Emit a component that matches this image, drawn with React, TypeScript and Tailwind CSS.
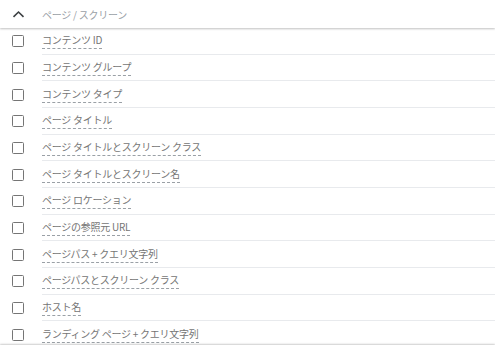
import React from "react";

const items = [
  "コンテンツ ID",
  "コンテンツ グループ",
  "コンテンツ タイプ",
  "ページ タイトル",
  "ページ タイトルとスクリーン クラス",
  "ページ タイトルとスクリーン名",
  "ページ ロケーション",
  "ページの参照元 URL",
  "ページパス + クエリ文字列",
  "ページパスとスクリーン クラス",
  "ホスト名",
  "ランディング ページ + クエリ文字列",
];

export default function App() {
  return (
    <div
      className="relative w-[495px] h-[350px] overflow-hidden bg-white"
      style={{ fontFamily: '"Noto Sans CJK JP", "Noto Sans", sans-serif' }}
    >
      <div className="relative z-10 flex h-[28px] items-center bg-white shadow-[0_1px_2px_rgba(0,0,0,0.25)]">
        <div className="flex w-[36px] justify-center">
          <svg width="13" height="8" viewBox="0 0 13 8">
            <path d="M1.5 6.8 L6.5 2 L11.5 6.8" fill="none" stroke="#3c4043" strokeWidth="1.6" />
          </svg>
        </div>
        <span className="ml-[6px] text-[10px] text-[#9aa0a6] tracking-[-0.25px]">ページ / スクリーン</span>
      </div>
      <div className="flex flex-col">
        {items.map((t, i) => (
          <div key={i} className="flex h-[26.67px] items-stretch">
            <div className="flex w-[42px] shrink-0 items-center pl-[12px]">
              <div className="h-[12px] w-[12px] rounded-[1.5px] border-[1.5px] border-[#757575]" />
            </div>
            <div
              className={`flex flex-1 items-center ${i < items.length - 1 ? "border-b border-[#e8eaed]" : ""}`}
            >
              <span className="mt-[1px] text-[10px] leading-[13px] pb-[2px] text-[#757575] border-b border-dashed border-[#9aa0a6] tracking-[-0.25px]">
                {t}
              </span>
            </div>
          </div>
        ))}
      </div>
      <div className="absolute left-0 right-0 top-[345px] h-[5px] bg-white shadow-[0_-1px_2px_rgba(0,0,0,0.2)]" />
    </div>
  );
}
